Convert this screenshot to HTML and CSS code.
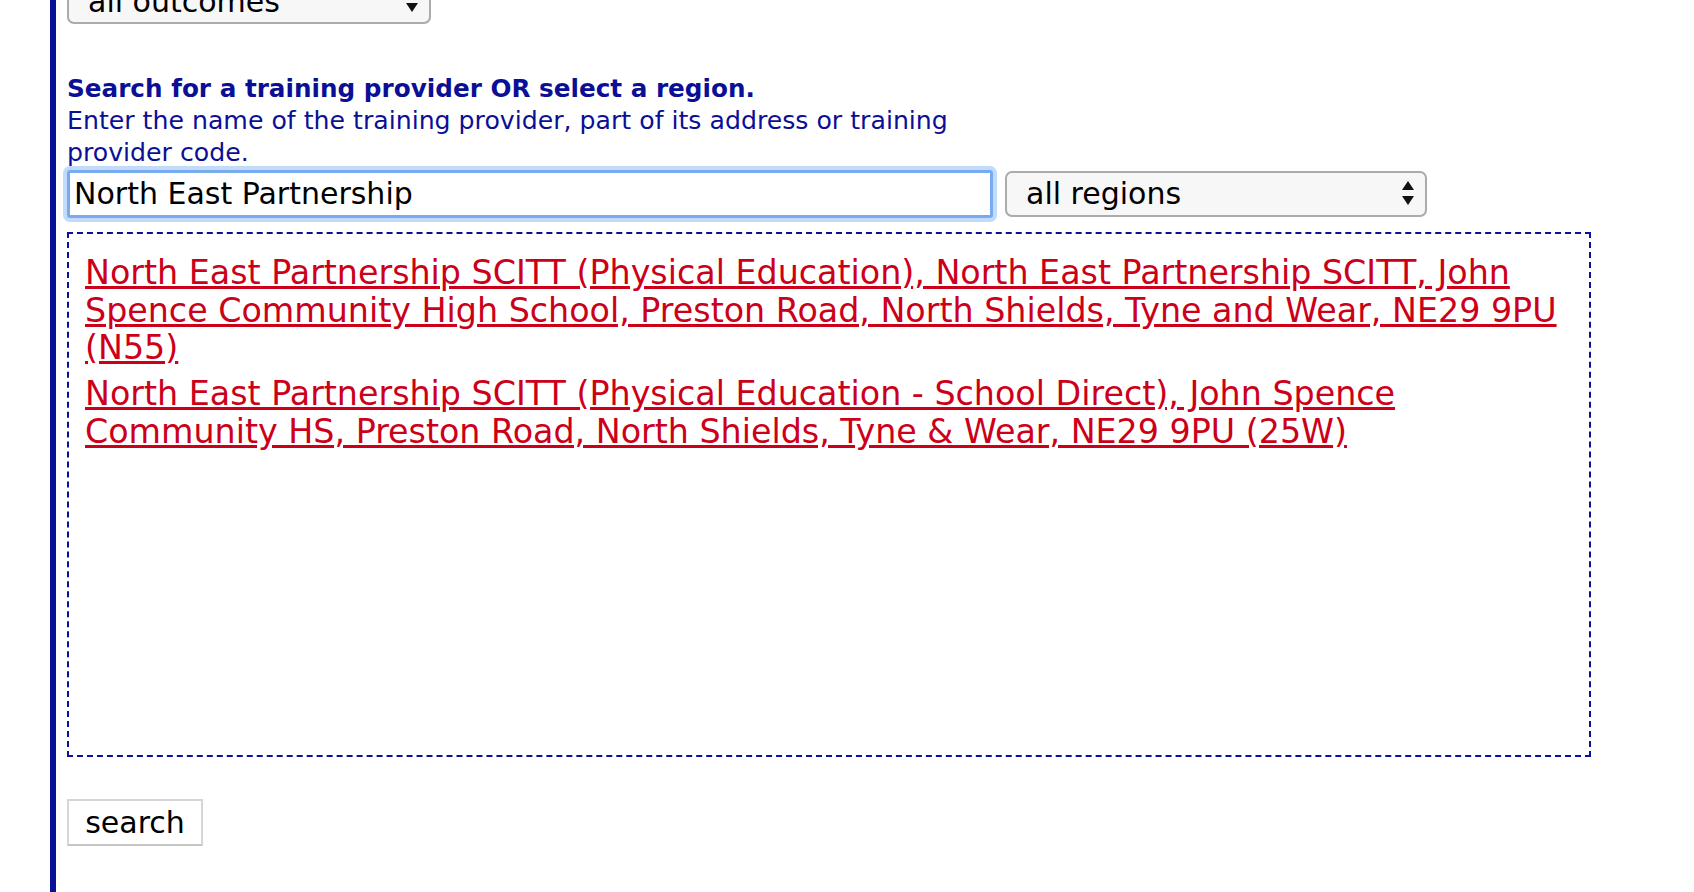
FILE: index.html
```html
<!DOCTYPE html>
<html lang="en">
<head>
<meta charset="utf-8">
<title>Search for a training provider</title>
<link rel="stylesheet" href="styles.css">
</head>
<body>
<div class="page">
  <form class="form" action="#" onsubmit="return false">
    <div class="select-wrap outcomes">
      <select class="sel"><option>all outcomes</option></select>
      <svg class="arrows" viewBox="0 0 12 24" width="12" height="24" aria-hidden="true"><polygon points="0,9 6,0 12,9"/><polygon points="0,15 12,15 6,24"/></svg>
    </div>
    <div class="label-block">
      <p class="q">Search for a training provider OR select a region.</p>
      <p class="hint">Enter the name of the training provider, part of its address or training provider code.</p>
    </div>
    <div class="row">
      <input class="provider" type="text" value="North East Partnership">
      <div class="select-wrap region">
        <select class="sel"><option>all regions</option></select>
        <svg class="arrows" viewBox="0 0 12 24" width="12" height="24" aria-hidden="true"><polygon points="0,9 6,0 12,9"/><polygon points="0,15 12,15 6,24"/></svg>
      </div>
    </div>
    <div class="results">
      <a href="#">North East Partnership SCITT (Physical Education), North East Partnership SCITT, John Spence Community High School, Preston Road, North Shields, Tyne and Wear, NE29 9PU (N55)</a>
      <a href="#">North East Partnership SCITT (Physical Education - School Direct), John Spence Community HS, Preston Road, North Shields, Tyne &amp; Wear, NE29 9PU (25W)</a>
    </div>
    <button class="search" type="submit">search</button>
  </form>
</div>
</body>
</html>
```
FILE: styles.css
```css
html, body {
  margin: 0;
  padding: 0;
  background: #ffffff;
}
body {
  font-family: "DejaVu Sans", Verdana, sans-serif;
  color: #000;
}
.page {
  display: flex;
  flex-direction: column;
  margin-left: 50px;
  border-left: 6px solid #0a1199;
  padding-left: 11px;
  min-height: 100vh;
  box-sizing: border-box;
}
.form {
  margin-top: -22px;
  display: flex;
  flex-direction: column;
  align-items: flex-start;
}
.select-wrap {
  position: relative;
  height: 46px;
}
.select-wrap.outcomes {
  width: 364px;
}
.select-wrap.region {
  width: 422px;
}
.sel {
  -webkit-appearance: none;
  appearance: none;
  width: 100%;
  height: 100%;
  box-sizing: border-box;
  margin: 0;
  background: #f7f7f7;
  border: 2px solid #ababab;
  border-radius: 7px;
  font-family: "DejaVu Sans", Verdana, sans-serif;
  font-size: 30px;
  color: #000;
  padding: 0 40px 0 19px;
}
.arrows {
  position: absolute;
  right: 13px;
  top: 10px;
  fill: #111;
  pointer-events: none;
}
.label-block {
  width: 927px;
  margin-top: 48.6px;
  color: #0b0f96;
  font-size: 25.2px;
  line-height: 32px;
}
.label-block p {
  margin: 0;
}
.q {
  font-weight: bold;
  font-size: 24.7px;
}
.row {
  display: flex;
  align-items: center;
  gap: 12px;
  margin-top: 1.4px;
}
.provider {
  width: 926px;
  height: 48px;
  box-sizing: border-box;
  margin: 0;
  border: 3px solid #78aaf2;
  box-shadow: 0 0 0 4px #c3dbfb;
  border-radius: 3px;
  outline: none;
  padding: 0 4px;
  font-family: "DejaVu Sans", Verdana, sans-serif;
  font-size: 30px;
  color: #000;
  background: #fff;
}
.results {
  width: 1524px;
  height: 525px;
  box-sizing: border-box;
  margin-top: 14px;
  border: 2px dashed #0a1199;
  padding: 20px 16px;
}
.results a {
  display: block;
  color: #cc0019;
  font-size: 33.3px;
  line-height: 37.7px;
  margin-bottom: 8.3px;
  text-decoration: underline;
}
.search {
  margin-top: 42px;
  width: 136px;
  height: 47px;
  box-sizing: border-box;
  border: 2px solid #d6d6d6;
  border-bottom-color: #c6c6c6;
  background: #fff;
  padding: 0;
  font-family: "DejaVu Sans", Verdana, sans-serif;
  font-size: 30px;
  color: #000;
}
```
